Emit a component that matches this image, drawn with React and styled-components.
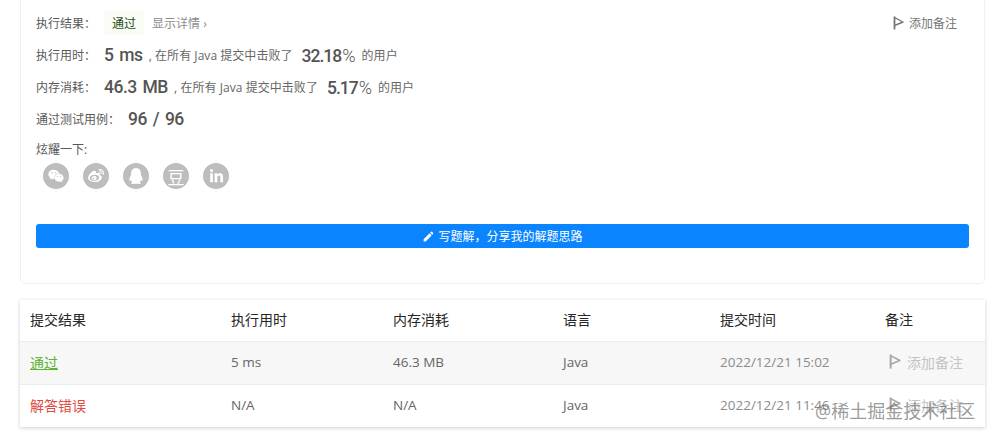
import React from "react";
import styled, { createGlobalStyle } from "styled-components";
import { FaWeixin, FaWeibo, FaQq, FaLinkedinIn } from "react-icons/fa";
import { MdEdit } from "react-icons/md";

const GlobalStyle = createGlobalStyle`
  html, body {
    margin: 0;
    padding: 0;
    background: #fff;
    overflow: hidden;
    font-family: "Open Sans", "Noto Sans CJK SC", sans-serif;
    color: #595959;
  }
`;

const Page = styled.div`
  position: relative;
  width: 991px;
  height: 437px;
  overflow: hidden;
  padding: 0 6px 0 20px;
  box-sizing: border-box;
`;

const Card = styled.div`
  box-sizing: border-box;
  height: 284px;
  padding: 11px 15px 0 15px;
  border: 1px solid #f0f0f0;
  border-top: none;
  border-radius: 0 0 5px 5px;
`;

const TopRow = styled.div`
  display: flex;
  align-items: center;
  height: 24px;
  margin-bottom: 8px;
  font-size: 12px;
`;

const Label = styled.span`
  width: ${props => props.width || 68}px;
  flex-shrink: 0;
  font-size: 12px;
  color: #595959;
`;

const Badge = styled.span`
  padding: 3px 8px;
  border-radius: 4px;
  background: #f8fcf5;
  color: #2a4a14;
`;

const Details = styled.span`
  margin-left: 8px;
  color: #8c8c8c;
`;

const NoteLink = styled.span`
  display: flex;
  align-items: center;
  gap: 4px;
  margin-left: auto;
  margin-right: 12px;
  color: #757575;
`;

const Big = styled.span`
  font-family: "Roboto", sans-serif;
  font-size: 17.5px;
  font-weight: 500;
  letter-spacing: -0.5px;
  color: #555;
  word-spacing: 2px;
`;

const Rate = styled(Big)`
  margin: 0 7px 0 9px;
  letter-spacing: -1px;
`;

const Percent = styled.span`
  font-size: 18px;
  font-weight: 300;
  margin-left: 1px;
`;

const Hint = styled.span`
  font-size: 12px;
  letter-spacing: 0.05px;
  color: #666;
  margin-left: ${props => props.lead || 0}px;
`;

const ShareLabel = styled.div`
  font-size: 12px;
  line-height: 16px;
  margin-top: 11px;
`;

const Shares = styled.div`
  display: flex;
  gap: 14px;
  margin: 5px 0 0 7px;
`;

const ShareIcon = styled.span`
  display: flex;
  align-items: center;
  justify-content: center;
  width: 26px;
  height: 26px;
  border-radius: 50%;
  background: #bdbdbd;
  color: #fff;
  font-size: ${props => props.size || 16}px;
`;

const WriteButton = styled.div`
  display: flex;
  align-items: center;
  justify-content: center;
  gap: 3px;
  height: 24px;
  margin-top: 35px;
  border-radius: 3px;
  background: #0a84ff;
  color: #fff;
  font-size: 12px;
`;

const Table = styled.div`
  margin-top: 16px;
  background: #fff;
  box-shadow: 0 1px 4px rgba(0, 0, 0, 0.2);
`;

const Row = styled.div`
  display: grid;
  box-sizing: border-box;
  grid-template-columns: 201px 162px 170px 157px 165px 1fr;
  align-items: center;
  height: ${props => props.height}px;
  padding-left: 10px;
  padding-bottom: ${props => props.head ? 3 : 2}px;
  background: ${props => props.shaded ? "#f7f7f7" : "#fff"};
  border-top: ${props => props.ruled ? "1px solid #ececec" : "none"};
  font-size: ${props => props.head ? 14 : 13.5}px;
  color: ${props => props.head ? "#262626" : "#666"};
`;

const Status = styled.span`
  font-size: 14px;
  color: ${props => props.color};
  text-decoration: ${props => props.underline ? "underline" : "none"};
`;

const Time = styled.span`
  color: #8c8c8c;
  font-size: 13.5px;
`;

const RowNote = styled.span`
  display: flex;
  align-items: center;
  gap: 5px;
  margin-left: 4px;
  color: #c4c4c4;
  font-size: 14px;
`;

const Watermark = styled.div`
  position: absolute;
  left: 815px;
  top: 399px;
  font-size: 18px;
  line-height: 24px;
  color: rgba(110, 110, 110, 0.7);
`;

const Flag = ({ size = 12, color = "currentColor" }) => (
  <svg width={size} height={size * 7 / 6} viewBox="0 0 12 14" fill="none" stroke={color} strokeWidth="1.4">
    <path d="M1.5 0.5V13.5" strokeWidth="1.8" />
    <path d="M1.5 1.5L10 6L1.5 9.5" strokeLinejoin="round" />
  </svg>
);

const rows = [
  { status: "通过", color: "#5cb130", underline: true, time: "5 ms", mem: "46.3 MB", at: "2022/12/21 15:02", shaded: true, height: 43 },
  { status: "解答错误", color: "#e2493f", time: "N/A", mem: "N/A", at: "2022/12/21 11:46", height: 43 },
];

export default function App() {
  return (
    <Page>
      <GlobalStyle />
      <Card>
        <TopRow>
          <Label>执行结果：</Label>
          <Badge>通过</Badge>
          <Details>显示详情 ›</Details>
          <NoteLink><Flag />添加备注</NoteLink>
        </TopRow>
        <TopRow>
          <Label>执行用时：</Label>
          <Big>5 ms</Big>
          <Hint lead={3}>&nbsp;, 在所有 Java 提交中击败了</Hint>
          <Rate>32.18<Percent>%</Percent></Rate>
          <Hint>的用户</Hint>
        </TopRow>
        <TopRow>
          <Label>内存消耗：</Label>
          <Big>46.3 MB</Big>
          <Hint lead={3}>&nbsp;, 在所有 Java 提交中击败了</Hint>
          <Rate>5.17<Percent>%</Percent></Rate>
          <Hint>的用户</Hint>
        </TopRow>
        <TopRow>
          <Label width={92}>通过测试用例：</Label>
          <Big>96 / 96</Big>
        </TopRow>
        <ShareLabel>炫耀一下:</ShareLabel>
        <Shares>
          <ShareIcon><FaWeixin /></ShareIcon>
          <ShareIcon><FaWeibo /></ShareIcon>
          <ShareIcon><FaQq /></ShareIcon>
          <ShareIcon size={17}>豆</ShareIcon>
          <ShareIcon size={15}><FaLinkedinIn /></ShareIcon>
        </Shares>
        <WriteButton><MdEdit size={13} />写题解，分享我的解题思路</WriteButton>
      </Card>
      <Table>
        <Row head height={41}>
          <span>提交结果</span>
          <span>执行用时</span>
          <span>内存消耗</span>
          <span>语言</span>
          <span>提交时间</span>
          <span>备注</span>
        </Row>
        {rows.map(row => (
          <Row key={row.status} ruled shaded={row.shaded} height={row.height}>
            <Status color={row.color} underline={row.underline}>{row.status}</Status>
            <span>{row.time}</span>
            <span>{row.mem}</span>
            <span>Java</span>
            <Time>{row.at}</Time>
            <RowNote><Flag size={13} color="#a6a6a6" />添加备注</RowNote>
          </Row>
        ))}
      </Table>
      <Watermark>@稀土掘金技术社区</Watermark>
    </Page>
  );
}
